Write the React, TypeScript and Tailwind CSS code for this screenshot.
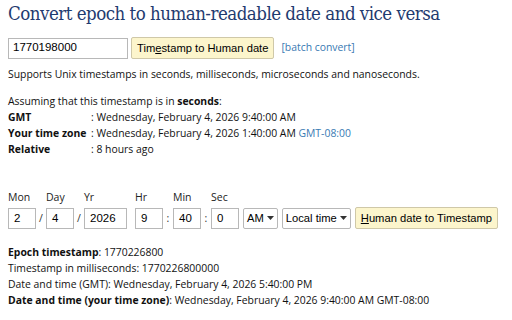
import React from "react";

const body = { fontFamily: '"Open Sans", sans-serif' };
const arial = { fontFamily: '"Liberation Sans", Arial, sans-serif' };

function Field({ label, value, w }: { label: string; value: string; w: string }) {
  return (
    <div className="flex flex-col">
      <span className="text-[10.5px] leading-[14px] text-[#222] mb-[4px]">{label}</span>
      <div
        className={`${w} h-[21px] border border-[#b8b8b8] bg-white flex items-center px-[5px] text-[11.5px] text-black`}
        style={arial}
      >
        {value}
      </div>
    </div>
  );
}

function Sep({ c }: { c: string }) {
  return <span className="self-end h-[21px] flex items-center text-[10.5px] text-[#333] w-[10px] justify-center">{c}</span>;
}

function Select({ label }: { label: string }) {
  return (
    <div
      className="h-[21px] border border-[#b8b8b8] rounded-[2px] bg-white flex items-center px-[3px] gap-[3px] text-[11.2px] text-black whitespace-nowrap"
      style={arial}
    >
      <span>{label}</span>
      <svg width="7" height="4" viewBox="0 0 7 4"><path d="M0 0h7L3.5 4z" fill="#333" /></svg>
    </div>
  );
}

export default function App() {
  return (
    <div className="w-[512px] h-[320px] bg-white overflow-hidden px-[8px] text-[#111]" style={body}>
      <h1
        className="text-[18.5px] leading-[24px] tracking-[-0.5px] text-[#1f3b70] pt-[2px] whitespace-nowrap"
        style={{ fontFamily: '"DejaVu Serif Condensed", "DejaVu Serif", serif' }}
      >
        Convert epoch to human-readable date and vice versa
      </h1>
      <div className="flex items-center mt-[11px] gap-[3px]">
        <div
          className="w-[120px] h-[21px] border border-[#b8b8b8] bg-white flex items-center px-[4px] text-[11.5px] text-black"
          style={arial}
        >
          1770198000
        </div>
        <div
          className="h-[22px] px-[5px] border border-[#cfc8a8] rounded-[2px] bg-[#fcf5cc] flex items-center text-[11.2px] text-black"
          style={arial}
        >
          Tim<span className="underline">e</span>stamp to Human date
        </div>
        <span className="ml-[4px] text-[10.4px] text-[#3a7ab3]">[batch convert]</span>
      </div>
      <p className="text-[10.4px] leading-[16px] mt-[7px]">
        Supports Unix timestamps in seconds, milliseconds, microseconds and nanoseconds.
      </p>
      <div className="text-[10.4px] leading-[16px] mt-[11px]">
        <p>
          Assuming that this timestamp is in <b>seconds</b>:
        </p>
        <div className="grid grid-cols-[83px_1fr] whitespace-nowrap">
          <b>GMT</b>
          <span>: Wednesday, February 4, 2026 9:40:00 AM</span>
          <b>Your time zone</b>
          <span>
            : Wednesday, February 4, 2026 1:40:00 AM <span className="text-[#3a7ab3]">GMT-08:00</span>
          </span>
          <b>Relative</b>
          <span>: 8 hours ago</span>
        </div>
      </div>
      <div className="flex items-end mt-[33px]">
        <Field label="Mon" value="2" w="w-[28px]" />
        <Sep c="/" />
        <Field label="Day" value="4" w="w-[28px]" />
        <Sep c="/" />
        <Field label="Yr" value="2026" w="w-[43px]" />
        <span className="w-[8px]" />
        <Field label="Hr" value="9" w="w-[28px]" />
        <Sep c=":" />
        <Field label="Min" value="40" w="w-[28px]" />
        <Sep c=":" />
        <Field label="Sec" value="0" w="w-[28px]" />
        <div className="flex items-center gap-[4px] ml-[4px]">
          <Select label="AM" />
          <Select label="Local time" />
          <div
            className="h-[22px] px-[5px] border border-[#cfc8a8] rounded-[2px] bg-[#fcf5cc] flex items-center text-[11.2px] text-black whitespace-nowrap"
            style={arial}
          >
            <span className="underline">H</span>uman date to Timestamp
          </div>
        </div>
      </div>
      <div className="text-[10.4px] leading-[16px] mt-[15px]">
        <p>
          <b>Epoch timestamp</b>: 1770226800
        </p>
        <p>Timestamp in milliseconds: 1770226800000</p>
        <p>Date and time (GMT): Wednesday, February 4, 2026 5:40:00 PM</p>
        <p>
          <b>Date and time (your time zone)</b>: Wednesday, February 4, 2026 9:40:00 AM GMT-08:00
        </p>
      </div>
    </div>
  );
}
